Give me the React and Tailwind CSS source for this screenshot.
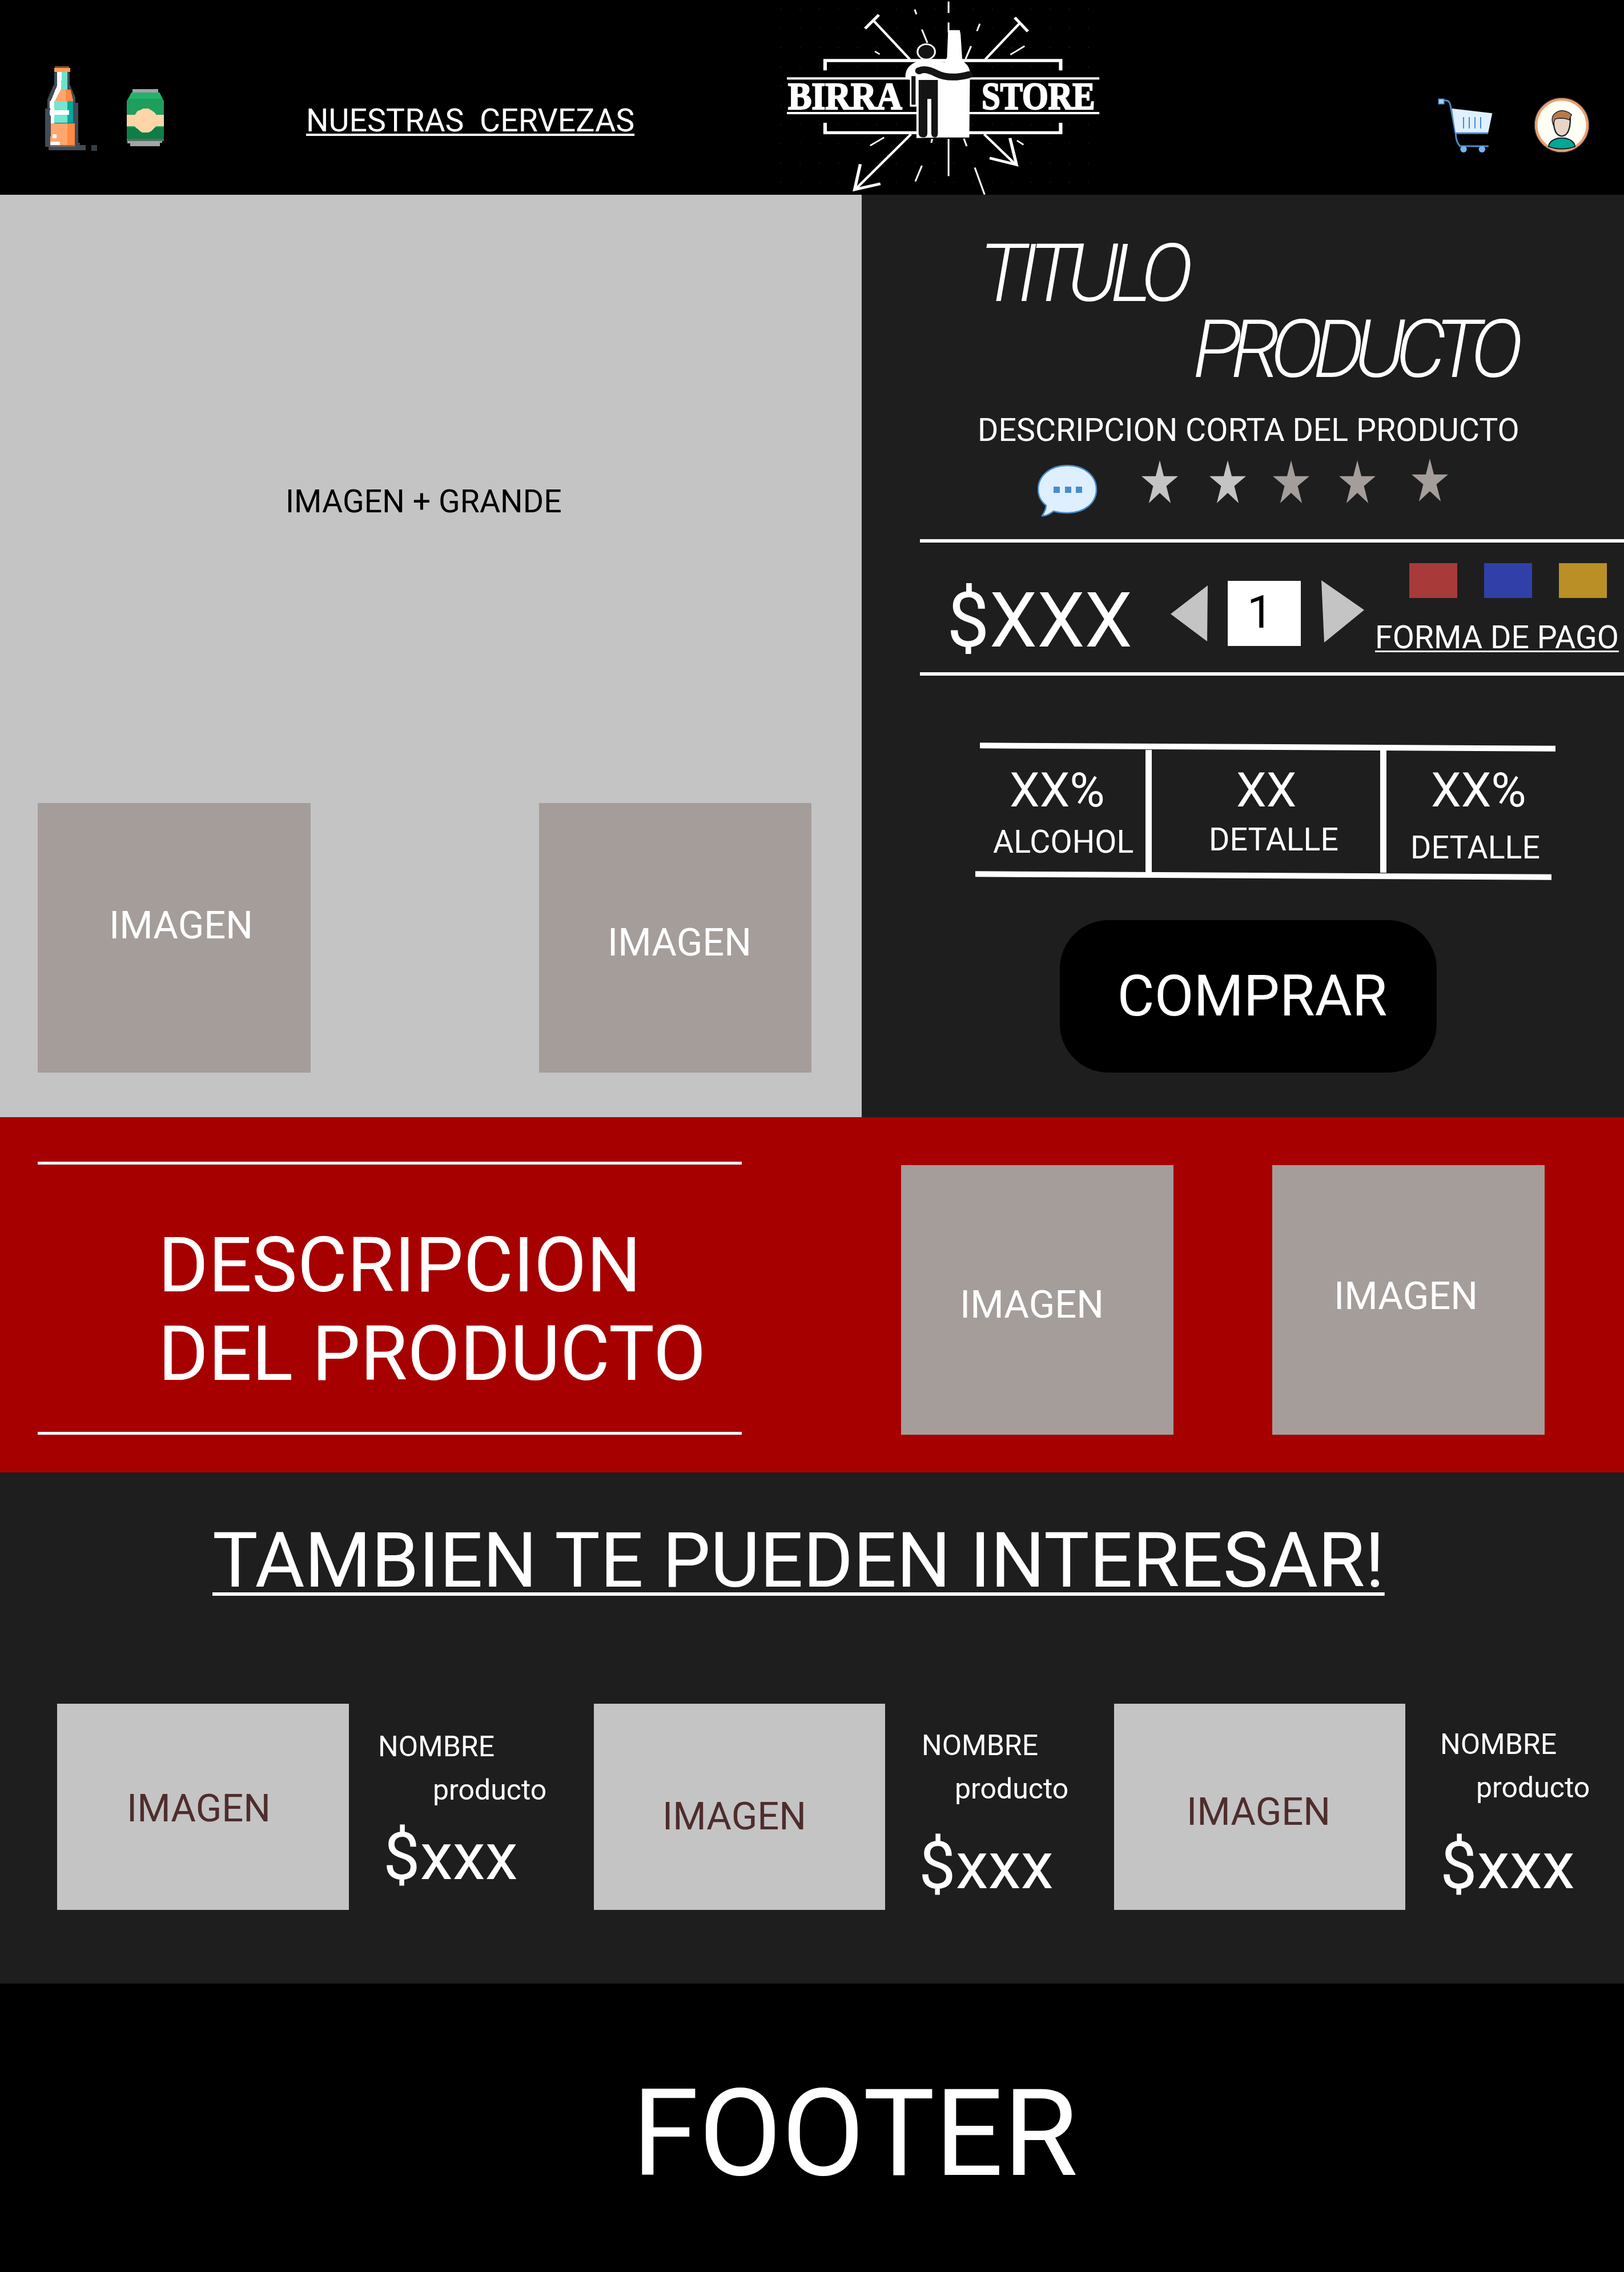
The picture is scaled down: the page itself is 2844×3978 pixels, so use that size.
import React from "react";

function BottleCan() {
  return (
    <svg viewBox="0 0 750 540" className="w-[250px] h-[180px] shrink-0 block" shapeRendering="crispEdges">
      <path d="M110 50H180V80H185V140L215 210V240H230V450H240V462H270V490H75V470H58V270H70V220L105 140V80H110Z" fill="#424c56" />
      <path d="M105 57H190V78H105Z" fill="#ff9d5c" />
      <path d="M108 48H182V57H108Z" fill="#8a4a28" />
      <path d="M120 78H175V170H120Z" fill="#72e0cb" />
      <path d="M120 170H190L205 230H100Z" fill="#ffa66e" />
      <path d="M165 170H190L205 230H165Z" fill="#ff8a44" />
      <path d="M100 232H205V345H100Z" fill="#72e6d0" />
      <path d="M175 232H205V345H175Z" fill="#02a99c" />
      <path d="M120 78H145L140 170L105 235H85L120 150Z" fill="#fff" />
      <path d="M80 232H105V370H90Z" fill="#fff" />
      <path d="M80 278H182V302H80Z" fill="#fff" />
      <path d="M88 348H212V462H84Z" fill="#ffa66e" />
      <path d="M175 348H212V462H175Z" fill="#ff8a44" />
      <path d="M85 443H135V462H85ZM95 405H118V427H95Z" fill="#fff" />
      <path d="M84 462H215V472H84Z" fill="#7d6a60" />
      <path d="M300 462H330V492H300Z" fill="#353d45" />
      <path d="M515 168H652V186H515Z" fill="#9fa3a8" />
      <path d="M510 186H658L680 230V440H487V230Z" fill="#1f9e5e" />
      <path d="M510 186H658L670 220H495Z" fill="#24b26b" />
      <path d="M487 368H680V430H487Z" fill="#0f7d46" />
      <path d="M540 285L575 270H600L632 290L640 302H680V362H640L620 385L600 396H565L540 375L525 362H487V302H530Z" fill="#ffd5a8" />
      <path d="M490 430H680V442H490Z" fill="#55705f" />
      <path d="M490 440H672V450H660V468H505V452H490Z" fill="#a2a5a8" />
    </svg>
  );
}

function Logo() {
  const rays = [
    [787, 8, 787, 68], [787, 118, 787, 170], [787, 730, 787, 925], [632, 50, 640, 75], [665, 155, 690, 225],
    [930, 125, 917, 163], [890, 242, 865, 310], [450, 270, 472, 285], [1135, 242, 1070, 287], [492, 722, 428, 765],
    [1100, 738, 1130, 760], [712, 730, 708, 750], [857, 728, 870, 768], [665, 870, 635, 953], [907, 880, 952, 1022],
  ];
  const dots = [];
  for (let y = 47; y < 1000; y += 101) for (let x = 18; x < 1450; x += 88) dots.push([x, y]);
  return (
    <svg viewBox="0 0 1568 1023" preserveAspectRatio="none" className="w-[600px] h-[341px] shrink-0 block">
      {dots.map(([x, y]) => (
        <rect key={`${x}-${y}`} x={x} y={y} width="3" height="3" fill="#4a4a4a" />
      ))}
      <g fill="none" stroke="#fff" strokeLinecap="butt">
        <path d="M610 312L445 110M955 312L1110 125M615 705L360 995M950 705L1090 860" strokeWidth="12" />
        <path d="M405 150L468 78M1090 92L1150 165" strokeWidth="14" />
        <path d="M383 862L357 996L475 965M1068 725L1098 865L975 830" strokeWidth="14" />
        <path d="M222 370V318H1300V370M222 645V697H1300V645" strokeWidth="16" />
        {rays.map((r) => (
          <line key={r.join()} x1={r[0]} y1={r[1]} x2={r[2]} y2={r[3]} strokeWidth="8" />
        ))}
      </g>
      <rect x="47" y="406" width="1430" height="12" fill="#fff" />
      <rect x="47" y="588" width="1430" height="12" fill="#fff" />
      <text transform="translate(52 572) scale(0.81 1)" fontFamily="'Liberation Serif', serif" fontWeight="700" fontSize="200" fill="#fff" stroke="#fff" strokeWidth="7">BIRRA</text>
      <text transform="translate(938 572) scale(0.77 1)" fontFamily="'Liberation Serif', serif" fontWeight="700" fontSize="200" fill="#fff" stroke="#fff" strokeWidth="7">STORE</text>
      <path d="M785 158H838L842 180L850 320Q885 345 885 385L882 722H745L640 725V560H610V420L590 410Q585 350 640 325L690 312L770 328L780 300Z" fill="#fff" />
      <circle cx="685" cy="272" r="40" fill="#141414" stroke="#fff" strokeWidth="8" />
      <path d="M650 395V700Q650 722 672 722Q690 722 690 700V520H708V700Q708 722 725 722Q738 722 738 700V420H650Z" fill="#141414" />
      <path d="M652 372Q680 355 730 385Q790 420 880 392" fill="none" stroke="#141414" strokeWidth="36" strokeLinecap="round" />
      <path d="M617 400H636V550H617Z" fill="#141414" />
    </svg>
  );
}

function CartAvatar() {
  return (
    <svg viewBox="0 0 900 390" className="w-[300px] h-[130px] shrink-0 block">
      <path d="M70 78H100Q118 80 122 115L148 255Q150 300 172 318H320" fill="none" stroke="#4a8ccb" strokeWidth="9" />
      <rect x="58" y="70" width="28" height="26" fill="#a8cff0" stroke="#4a8ccb" strokeWidth="5" />
      <path d="M128 120L340 145L318 250H148Z" fill="#dff0ff" />
      <path d="M148 250H318" stroke="#4a8ccb" strokeWidth="9" />
      <path d="M189 165V225M219 165V225M249 165V225M279 165V225" stroke="#4a8ccb" strokeWidth="6" />
      <circle cx="189" cy="334" r="17" fill="#79b4ea" />
      <circle cx="286" cy="334" r="17" fill="#79b4ea" />
      <circle cx="705" cy="207" r="135" fill="#fffff6" stroke="#eb9f6c" strokeWidth="14" />
      <circle cx="705" cy="207" r="144" fill="none" stroke="#2a2d3a" strokeWidth="4" />
      <path d="M635 320Q640 285 690 275H720Q770 285 775 320Q705 345 635 320Z" fill="#02a894" stroke="#17202a" strokeWidth="6" />
      <path d="M662 170Q660 262 705 265Q750 262 750 170Z" fill="#e8d5c6" stroke="#17202a" strokeWidth="7" />
      <path d="M660 205Q645 165 670 145Q700 120 740 140L757 152L748 170L745 180Q715 165 670 175Z" fill="#b87a4a" stroke="#17202a" strokeWidth="4" />
    </svg>
  );
}

function Speech() {
  return (
    <svg viewBox="0 0 105 93" className="w-[105px] h-[93px] shrink-0 block">
      <path d="M52 2C82 2 103 20 103 44C103 68 82 85 52 85C42 85 35 84 28 82C20 88 14 91 8 90C12 84 15 78 15 72C6 65 1 55 1 44C1 20 22 2 52 2Z" fill="#deefff" stroke="#4a8ccb" strokeWidth="2.5" />
      <rect x="28" y="39" width="11" height="11" fill="#4a8ccb" />
      <rect x="48" y="39" width="11" height="11" fill="#4a8ccb" />
      <rect x="67" y="39" width="11" height="11" fill="#4a8ccb" />
    </svg>
  );
}

function Star({ className, fill }) {
  return (
    <svg viewBox="0 0 100 100" preserveAspectRatio="none" className={className}>
      <polygon points="50,0 61,37 100,37 68,60 80,100 50,76 20,100 32,60 0,37 39,37" fill={fill} />
    </svg>
  );
}

export default function App() {
  return (
    <div className="w-[2844px] h-[3978px] overflow-hidden font-['Roboto',sans-serif] leading-none whitespace-pre text-white bg-black">
      <header className="flex items-start h-[341px] bg-black">
        <div className="ml-[60px] mt-[100px]"><BottleCan /></div>
        <a className="w-[576px] ml-[226px] mt-[184px] text-[55.5px] underline decoration-[4px] underline-offset-[4px]">NUESTRAS  CERVEZAS</a>
        <div className="ml-[248px]"><Logo /></div>
        <div className="ml-[540px] mt-[150px]"><CartAvatar /></div>
      </header>

      <section className="flex h-[1615px]">
        <div className="w-[1509px] bg-[#c4c4c4] text-black">
          <p className="ml-[500px] pt-[510px] text-[55.5px]">IMAGEN + GRANDE</p>
          <div className="flex ml-[66px] mt-[499px]">
            <div className="w-[478px] h-[472px] bg-[#a59d9a] text-white text-[67px] pl-[125px] pt-[181px]">IMAGEN</div>
            <div className="w-[477px] h-[472px] ml-[400px] bg-[#a59d9a] text-white text-[67px] pl-[120px] pt-[211px]">IMAGEN</div>
          </div>
        </div>

        <div className="flex-1 bg-[#1e1e1e]">
          <h1 className="ml-[206px] pt-[68px] text-[140px] italic font-light tracking-[-14px]">TITULO</h1>
          <h1 className="ml-[580px] mt-[-7px] text-[140px] italic font-light tracking-[-17px]">PRODUCTO</h1>
          <p className="ml-[203px] mt-[44px] text-[55.5px]">DESCRIPCION CORTA DEL PRODUCTO</p>

          <div className="flex items-start mt-[21px] ml-[308px] h-[103px]">
            <div className="mt-[10px]"><Speech /></div>
            <Star className="w-[64px] h-[75px] ml-[77px] mt-[3px]" fill="#c4c4c4" />
            <Star className="w-[64px] h-[75px] ml-[55px] mt-[3px]" fill="#c4c4c4" />
            <Star className="w-[64px] h-[75px] ml-[47px] mt-[3px]" fill="#a59d9a" />
            <Star className="w-[64px] h-[75px] ml-[52px] mt-[3px]" fill="#a59d9a" />
            <Star className="w-[64px] h-[75px] ml-[63px]" fill="#a59d9a" />
          </div>

          <div className="ml-[102px] mt-[38px] h-[6px] bg-white" />

          <div className="flex items-start h-[227px]">
            <div className="w-[541px] pl-[149px] pt-[70px] text-[133px]">$XXX</div>
            <svg viewBox="0 0 65 98" className="w-[65px] h-[98px] mt-[75px] shrink-0">
              <polygon points="65,0 64,98 0,50" fill="#c4c4c4" />
            </svg>
            <div className="w-[128px] h-[114px] ml-[35px] mt-[67px] bg-white text-black text-[80px] pl-[34px] pt-[15px]">1</div>
            <svg viewBox="0 0 75 109" className="w-[75px] h-[109px] ml-[36px] mt-[66px] shrink-0">
              <polygon points="0,0 75,52 5,109" fill="#c4c4c4" />
            </svg>
            <div className="ml-[19px]">
              <div className="flex gap-[47px] pl-[60px] pt-[36px]">
                <div className="w-[84px] h-[61px] bg-[#a83a3a]" />
                <div className="w-[84px] h-[61px] bg-[#3040a8]" />
                <div className="w-[84px] h-[61px] bg-[#b98f26]" />
              </div>
              <a className="block mt-[42px] text-[55.5px] underline decoration-[3px] underline-offset-[4px]">FORMA DE PAGO</a>
            </div>
          </div>

          <div className="ml-[102px] h-[6px] bg-white" />

          <div className="ml-[207px] mt-[120px] w-[1008px] h-[10px] bg-white rotate-[0.3deg]" />
          <div className="flex ml-[207px] h-[215px]">
            <div className="w-[301px] border-r-[11px] border-white pt-[29px]">
              <p className="pl-[52px] text-[84px]">XX%</p>
              <p className="pl-[23px] mt-[21px] text-[55.5px]">ALCOHOL</p>
            </div>
            <div className="w-[411px] border-r-[11px] border-white pt-[29px]">
              <p className="pl-[148px] text-[84px]">XX</p>
              <p className="pl-[100px] mt-[17px] text-[55.5px]">DETALLE</p>
            </div>
            <div className="w-[296px] pt-[29px]">
              <p className="pl-[78px] text-[84px]">XX%</p>
              <p className="pl-[42px] mt-[31px] text-[55.5px]">DETALLE</p>
            </div>
          </div>
          <div className="ml-[199px] w-[1009px] h-[10px] bg-white rotate-[0.3deg]" />

          <button className="flex items-center justify-center ml-[347px] mt-[73px] w-[660px] h-[267px] pl-[14px] rounded-[85px] bg-black text-white text-[100px]">COMPRAR</button>
        </div>
      </section>

      <section className="flex h-[622px] bg-[#a70000]">
        <div className="w-[1578px] pt-[78px]">
          <div className="ml-[66px] w-[1233px] h-[5px] bg-white" />
          <h2 className="ml-[277px] mt-[99px] text-[134px] leading-[155px]">{"DESCRIPCION\nDEL PRODUCTO"}</h2>
          <div className="ml-[66px] mt-[59px] w-[1233px] h-[5px] bg-white" />
        </div>
        <div className="w-[477px] h-[472px] mt-[84px] bg-[#a59d9a] text-[67px] pl-[103px] pt-[211px]">IMAGEN</div>
        <div className="w-[477px] h-[472px] mt-[84px] ml-[173px] bg-[#a59d9a] text-[67px] pl-[108px] pt-[196px]">IMAGEN</div>
      </section>

      <section className="h-[895px] bg-[#1e1e1e]">
        <h2 className="ml-[372px] pt-[88px] text-[133.5px] underline decoration-[6px] underline-offset-[10px]">TAMBIEN TE PUEDEN INTERESAR!</h2>
        <div className="flex h-[361px] mt-[183.5px] pl-[100px]">
          <div className="w-[511px] bg-[#c4c4c4] text-[#4f2d2d] text-[67px] pl-[122px] pt-[150px]">IMAGEN</div>
          <div className="w-[429px] text-[50px] pt-[50px]">
            <p className="pl-[51px]">NOMBRE</p>
            <p className="pl-[147px] mt-[26px]">producto</p>
            <p className="pl-[60px] mt-[34px] text-[115px]">$xxx</p>
          </div>
          <div className="w-[510px] bg-[#c4c4c4] text-[#4f2d2d] text-[67px] pl-[120px] pt-[164px]">IMAGEN</div>
          <div className="w-[401px] text-[50px] pt-[48px]">
            <p className="pl-[64px]">NOMBRE</p>
            <p className="pl-[122px] mt-[26px]">producto</p>
            <p className="pl-[59px] mt-[52px] text-[115px]">$xxx</p>
          </div>
          <div className="w-[510px] bg-[#c4c4c4] text-[#4f2d2d] text-[67px] pl-[127px] pt-[156px]">IMAGEN</div>
          <div className="w-[383px] text-[50px] pt-[46px]">
            <p className="pl-[61px]">NOMBRE</p>
            <p className="pl-[124px] mt-[26px]">producto</p>
            <p className="pl-[61px] mt-[54px] text-[115px]">$xxx</p>
          </div>
        </div>
      </section>

      <footer className="h-[505px] bg-black pt-[158px] pl-[1107px] text-[211px]">FOOTER</footer>
    </div>
  );
}
